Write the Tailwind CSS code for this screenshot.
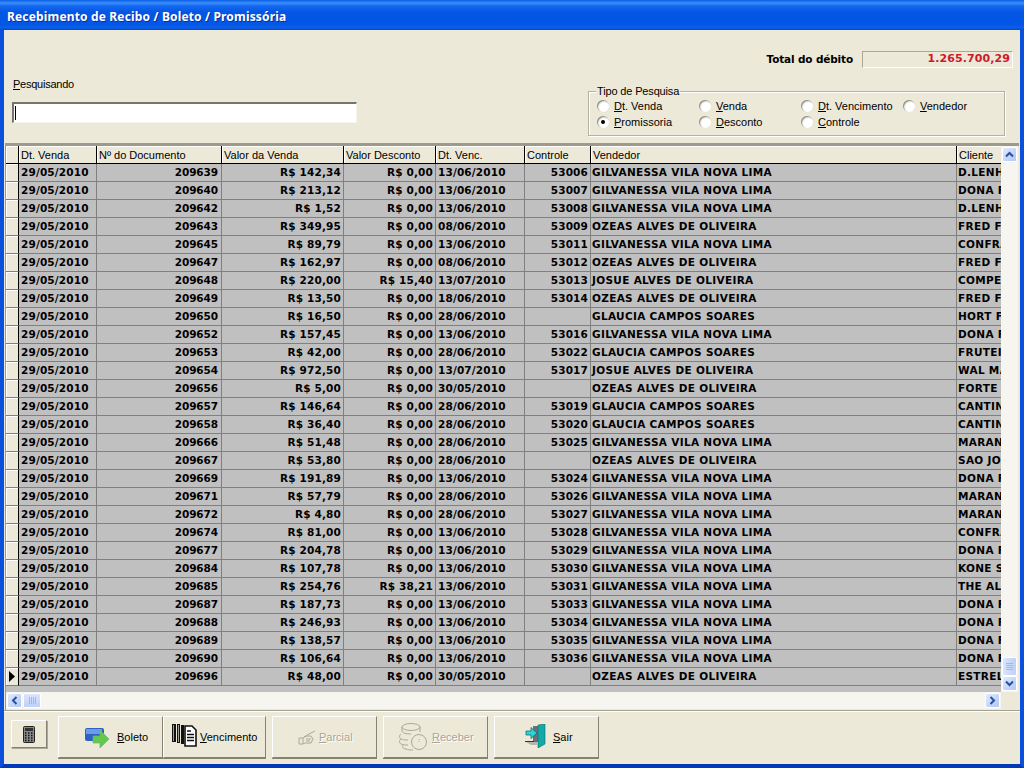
<!DOCTYPE html>
<html>
<head>
<meta charset="utf-8">
<script src="https://cdn.jsdelivr.net/npm/@tailwindcss/browser@4"></script>
</head>
<body class="m-0 overflow-hidden">
<div class="w-[1024px] h-[768px] flex flex-col bg-[#ece9d8] font-['Liberation_Sans',sans-serif] text-[11px] text-black overflow-hidden">
  <!-- title bar -->
  <div class="h-[30px] shrink-0 flex items-center pl-[7px] pt-[4px] bg-[linear-gradient(180deg,#0a5ee6_0px,#3b8ffb_3px,#1468ee_6px,#0457e4_12px,#0356e6_24px,#0a5fe8_28px,#0047c4_30px)] text-white font-['Noto_Sans',sans-serif] font-bold text-[12px] tracking-[0.16px] [text-shadow:1px_1px_0_#0a2f9c]">Recebimento de Recibo / Boleto / Promissória</div>
  <!-- client area -->
  <div class="flex-1 min-h-0 flex flex-col border-x-[4px] border-b-[4px] border-x-[#0a50dc] border-b-[#0339b8]">
    <!-- search panel -->
    <div class="h-[113px] shrink-0 flex justify-between">
      <div class="pl-[9px] pt-[47px] w-[353px]">
        <div class="leading-[14px] h-[14px] tracking-[-0.25px]"><u>P</u>esquisando</div>
        <div class="mt-[11px] ml-[-1px] h-[21px] bg-white border-t-2 border-l-2 border-t-[#77746a] border-l-[#77746a] border-b border-r border-b-[#f5f4ee] border-r-[#f5f4ee] flex items-center pl-[1px]"><div class="w-px h-[14px] bg-black"></div></div>
      </div>
      <div class="flex flex-col items-end pr-[7px] pt-[21px]">
        <div class="flex items-center h-[17px]">
          <span class="font-['DejaVu_Sans',sans-serif] font-bold text-[10.5px] tracking-[-0.15px]">Total do débito</span>
          <div class="ml-[9px] w-[151px] h-[17px] border border-t-[#aca899] border-l-[#aca899] border-b-white border-r-white flex items-center justify-end pr-[2px] font-['DejaVu_Sans',sans-serif] font-bold text-[11px] tracking-[0.1px] text-[#cc1a2a]">1.265.700,29</div>
        </div>
        <div class="relative mt-[23px] mr-[8px] w-[417px] h-[45px] border border-[#b5b2a2] shadow-[inset_1px_1px_0_#fff,1px_1px_0_#fff] pl-[8px] pt-[6px]">
          <span class="absolute left-[7px] top-[-7px] px-px bg-[#ece9d8] leading-[13px] tracking-[-0.15px]">Tipo de Pesquisa</span>
          <div class="grid grid-cols-[102px_102px_102px_100px] grid-rows-[16px_16px]">
            <label class="flex items-center gap-[5px]"><span class="w-[12px] h-[12px] rounded-full bg-[radial-gradient(circle_at_65%_65%,#fff_45%,#c9c6b8_100%)] shadow-[inset_1px_1px_1px_#8f8d80]"></span><span><u>D</u>t. Venda</span></label>
            <label class="flex items-center gap-[5px]"><span class="w-[12px] h-[12px] rounded-full bg-[radial-gradient(circle_at_65%_65%,#fff_45%,#c9c6b8_100%)] shadow-[inset_1px_1px_1px_#8f8d80]"></span><span><u>V</u>enda</span></label>
            <label class="flex items-center gap-[5px]"><span class="w-[12px] h-[12px] rounded-full bg-[radial-gradient(circle_at_65%_65%,#fff_45%,#c9c6b8_100%)] shadow-[inset_1px_1px_1px_#8f8d80]"></span><span><u>D</u>t. Vencimento</span></label>
            <label class="flex items-center gap-[5px]"><span class="w-[12px] h-[12px] rounded-full bg-[radial-gradient(circle_at_65%_65%,#fff_45%,#c9c6b8_100%)] shadow-[inset_1px_1px_1px_#8f8d80]"></span><span><u>V</u>endedor</span></label>
            <label class="flex items-center gap-[5px]"><span class="w-[12px] h-[12px] rounded-full bg-[radial-gradient(circle_at_65%_65%,#fff_45%,#c9c6b8_100%)] shadow-[inset_1px_1px_1px_#8f8d80] flex items-center justify-center"><span class="w-[4px] h-[4px] rounded-full bg-black"></span></span><span><u>P</u>romissoria</span></label>
            <label class="flex items-center gap-[5px]"><span class="w-[12px] h-[12px] rounded-full bg-[radial-gradient(circle_at_65%_65%,#fff_45%,#c9c6b8_100%)] shadow-[inset_1px_1px_1px_#8f8d80]"></span><span><u>D</u>esconto</span></label>
            <label class="flex items-center gap-[5px]"><span class="w-[12px] h-[12px] rounded-full bg-[radial-gradient(circle_at_65%_65%,#fff_45%,#c9c6b8_100%)] shadow-[inset_1px_1px_1px_#8f8d80]"></span><span><u>C</u>ontrole</span></label>
          </div>
        </div>
      </div>
    </div>
    <!-- grid -->
    <div class="h-[567px] shrink-0 ml-[1px] w-[1014px] border-t-[3px] border-l-[1px] border-t-[#9d9a8c] border-l-[#9d9a8c] flex flex-col">
      <div class="h-[546px] flex">
        <div class="w-[995px] h-[546px] bg-[#c0c0c0] overflow-hidden flex flex-col">
          <div class="h-[18px] shrink-0 grid grid-cols-[13px_78px_125px_122px_92px_89px_66px_366px_44px] bg-[#ece9d8] border-b border-b-black leading-[19px] [&>div]:border-r [&>div]:border-r-black [&>div]:pl-[2px] [&>div]:overflow-hidden [&>div]:whitespace-nowrap [&>div]:shadow-[inset_1px_1px_0_#fff]">
            <div></div><div>Dt. Venda</div><div>Nº do Documento</div><div>Valor da Venda</div><div>Valor Desconto</div><div>Dt. Venc.</div><div>Controle</div><div>Vendedor</div><div class="!border-r-0">Cliente</div>
          </div>
          <div id="rows" class="flex flex-col"></div>
        </div>
        <!-- vertical scrollbar -->
        <div class="w-[17px] h-[546px] bg-[#f6f5ef] flex flex-col items-center py-px">
          <div class="w-[15px] h-[15px] rounded-[2px] border border-white bg-[linear-gradient(135deg,#e1eafe,#aec8f7)] flex items-center justify-center"><svg width="9" height="7" viewBox="0 0 9 7"><path d="M1 5.5 4.5 2 8 5.5" fill="none" stroke="#2a4f9f" stroke-width="2"/></svg></div>
          <div class="flex-1"></div>
          <div class="w-[15px] h-[19px] rounded-[2px] border border-white bg-[linear-gradient(90deg,#dbe5fd,#bdd0fa)] flex flex-col items-center justify-center gap-px"><span class="w-[7px] h-px bg-[#9db8f0]"></span><span class="w-[7px] h-px bg-[#9db8f0]"></span><span class="w-[7px] h-px bg-[#9db8f0]"></span><span class="w-[7px] h-px bg-[#9db8f0]"></span></div>
          <div class="w-[15px] h-[15px] rounded-[2px] border border-white bg-[linear-gradient(135deg,#e1eafe,#aec8f7)] flex items-center justify-center"><svg width="9" height="7" viewBox="0 0 9 7"><path d="M1 1.5 4.5 5 8 1.5" fill="none" stroke="#2a4f9f" stroke-width="2"/></svg></div>
        </div>
      </div>
      <!-- horizontal scrollbar -->
      <div class="h-[17px] flex">
        <div class="w-[995px] h-[17px] bg-[#f6f5ef] flex items-center px-px">
          <div class="w-[15px] h-[15px] rounded-[2px] border border-white bg-[linear-gradient(135deg,#e1eafe,#aec8f7)] flex items-center justify-center"><svg width="7" height="9" viewBox="0 0 7 9"><path d="M5.5 1 2 4.5 5.5 8" fill="none" stroke="#2a4f9f" stroke-width="2"/></svg></div>
          <div class="ml-px w-[18px] h-[15px] rounded-[2px] border border-white bg-[linear-gradient(180deg,#dbe5fd,#bdd0fa)] flex items-center justify-center gap-px"><span class="w-px h-[7px] bg-[#9db8f0]"></span><span class="w-px h-[7px] bg-[#9db8f0]"></span><span class="w-px h-[7px] bg-[#9db8f0]"></span><span class="w-px h-[7px] bg-[#9db8f0]"></span></div>
          <div class="flex-1"></div>
          <div class="w-[15px] h-[15px] rounded-[2px] border border-white bg-[linear-gradient(135deg,#e1eafe,#aec8f7)] flex items-center justify-center"><svg width="7" height="9" viewBox="0 0 7 9"><path d="M1.5 1 5 4.5 1.5 8" fill="none" stroke="#2a4f9f" stroke-width="2"/></svg></div>
        </div>
        <div class="w-[17px] bg-[#ece9d8]"></div>
      </div>
    </div>
    <!-- toolbar -->
    <div class="flex-1 border-t border-t-[#a5a294] shadow-[inset_0_1px_0_#fff] flex items-start pt-[5px] pl-[7px]">
      <button class="mt-[4px] w-[36px] h-[28px] flex items-center justify-center bg-[#ece9d8] border border-t-white border-l-white border-r-[#85826f] border-b-[#85826f] shadow-[1px_1px_0_#aca899]">
        <svg width="12" height="17" viewBox="0 0 12 17"><rect x=".5" y=".5" width="11" height="16" rx="1" fill="#8a8a8a" stroke="#222"/><rect x="2" y="2" width="8" height="3" fill="#333"/><path d="M2 7h1.5M5 7h1.5M8 7h1.5M2 9.5h1.5M5 9.5h1.5M8 9.5h1.5M2 12h1.5M5 12h1.5M8 12h1.5M2 14.5h1.5M5 14.5h1.5M8 14.5h1.5" stroke="#111" stroke-width="1.5"/></svg>
      </button>
      <button class="ml-[11px] w-[105px] h-[42px] flex items-center bg-[#ece9d8] border border-t-white border-l-white border-r-[#85826f] border-b-[#85826f] shadow-[0_1px_0_#85826f] pl-[26px]">
        <svg class="mt-[4px]" width="25" height="24" viewBox="0 0 25 24"><rect x="0" y="1" width="19" height="13" rx="2" fill="#2b62c4"/><rect x="1" y="2" width="16" height="5" fill="#6e9be6"/><path d="M8 9h7V3l9 9-9 9v-5H8z" fill="#63c94a" stroke="#6fae8a" stroke-width=".7"/></svg>
        <span class="ml-[7px]"><u>B</u>oleto</span>
      </button>
      <button class="w-[103px] h-[42px] flex items-center bg-[#ece9d8] border border-t-white border-l-white border-r-[#85826f] border-b-[#85826f] shadow-[0_1px_0_#85826f] pl-[8px]">
        <svg class="mb-[4px]" width="25" height="24" viewBox="0 0 25 24"><path d="M0 1h4v18H0zM5 1h3v19H5zM9 2h3v19H9z" fill="#111"/><path d="M1.500 2v16M6.500 2v17" stroke="#fff" stroke-width=".6"/><path d="M13 3h7l4 4v16H13z" fill="#fff" stroke="#111" stroke-width="1.6"/><path d="M15 8h4M15 11.500h7M15 14.500h7M15 17.500h7" stroke="#111" stroke-width="1.6"/></svg>
        <span class="ml-[3px]"><u>V</u>encimento</span>
      </button>
      <button class="ml-[6px] w-[105px] h-[42px] flex items-center bg-[#ece9d8] border border-t-white border-l-white border-r-[#85826f] border-b-[#85826f] shadow-[0_1px_0_#85826f] pl-[25px] text-[#a8a596] [text-shadow:1px_1px_0_#fff]">
        <svg class="mt-[1px]" width="18" height="16" viewBox="0 0 18 16" fill="none" stroke="#aca899"><path d="M1 8h4v6H1zM5 8l4-3 8-4M6 7l3-1h4l2 3-2 4H7l-2 1M8 9h5M8 11h4"/></svg>
        <span class="ml-[3px]"><u>P</u>arcial</span>
      </button>
      <button class="ml-[6px] w-[105px] h-[42px] flex items-center bg-[#ece9d8] border border-t-white border-l-white border-r-[#85826f] border-b-[#85826f] shadow-[0_1px_0_#85826f] pl-[14px] text-[#a8a596] [text-shadow:1px_1px_0_#fff]">
        <svg width="30" height="30" viewBox="0 0 30 30" fill="none" stroke="#aca899"><ellipse cx="13" cy="5" rx="9" ry="3.500"/><path d="M4 5v4c0 2 4 3 9 3M22 5v5M3 12c-2 1-2 4 0 5 2 1 5 1 7 1M3 17c-2 1-2 4 0 5 2 1 5 1 7 1M5 23c-1 2 0 4 3 4 2 1 5 1 7 1"/><circle cx="21" cy="20" r="7.500"/><path d="M21 17v4" stroke-dasharray="1 1"/></svg>
        <span class="ml-[4px]"><u>R</u>eceber</span>
      </button>
      <button class="ml-[6px] w-[105px] h-[42px] flex items-center bg-[#ece9d8] border border-t-white border-l-white border-r-[#85826f] border-b-[#85826f] shadow-[0_1px_0_#85826f] pl-[30px]">
        <svg class="mb-[2px]" width="22" height="24" viewBox="0 0 22 24"><path d="M8 2h9v18H8z" fill="#6e6e78"/><path d="M13 1l7-1v20l-7 4z" fill="#12a9a6" stroke="#0c6f6e" stroke-width=".6"/><path d="M1 18h12v3H6z" fill="#b7b5ad"/><path d="M0 17.500h9" stroke="#333"/><path d="M1 7h5V3.500L12 9l-6 5.500V11H1z" fill="#27d6dc" stroke="#0b5f66" stroke-width=".7"/></svg>
        <span class="ml-[6px]"><u>S</u>air</span>
      </button>
    </div>
  </div>
</div>
<script>
const data = [
["209639","142,34","0,00","13/06/2010","53006","GILVANESSA VILA NOVA LIMA","D.LENHA"],
["209640","213,12","0,00","13/06/2010","53007","GILVANESSA VILA NOVA LIMA","DONA FLOR"],
["209642","1,52","0,00","13/06/2010","53008","GILVANESSA VILA NOVA LIMA","D.LENHA"],
["209643","349,95","0,00","08/06/2010","53009","OZEAS ALVES DE OLIVEIRA","FRED FRIOS"],
["209645","89,79","0,00","13/06/2010","53011","GILVANESSA VILA NOVA LIMA","CONFRARIA"],
["209647","162,97","0,00","08/06/2010","53012","OZEAS ALVES DE OLIVEIRA","FRED FRIOS"],
["209648","220,00","15,40","13/07/2010","53013","JOSUE ALVES DE OLIVEIRA","COMPER"],
["209649","13,50","0,00","18/06/2010","53014","OZEAS ALVES DE OLIVEIRA","FRED FRIOS"],
["209650","16,50","0,00","28/06/2010","","GLAUCIA CAMPOS SOARES","HORT FRUTI"],
["209652","157,45","0,00","13/06/2010","53016","GILVANESSA VILA NOVA LIMA","DONA FLOR"],
["209653","42,00","0,00","28/06/2010","53022","GLAUCIA CAMPOS SOARES","FRUTEIRA"],
["209654","972,50","0,00","13/07/2010","53017","JOSUE ALVES DE OLIVEIRA","WAL MART"],
["209656","5,00","0,00","30/05/2010","","OZEAS ALVES DE OLIVEIRA","FORTE"],
["209657","146,64","0,00","28/06/2010","53019","GLAUCIA CAMPOS SOARES","CANTINA"],
["209658","36,40","0,00","28/06/2010","53020","GLAUCIA CAMPOS SOARES","CANTINA"],
["209666","51,48","0,00","28/06/2010","53025","GILVANESSA VILA NOVA LIMA","MARANATA"],
["209667","53,80","0,00","28/06/2010","","OZEAS ALVES DE OLIVEIRA","SAO JOSE"],
["209669","191,89","0,00","13/06/2010","53024","GILVANESSA VILA NOVA LIMA","DONA FLOR"],
["209671","57,79","0,00","28/06/2010","53026","GILVANESSA VILA NOVA LIMA","MARANATA"],
["209672","4,80","0,00","28/06/2010","53027","GILVANESSA VILA NOVA LIMA","MARANATA"],
["209674","81,00","0,00","13/06/2010","53028","GILVANESSA VILA NOVA LIMA","CONFRARIA"],
["209677","204,78","0,00","13/06/2010","53029","GILVANESSA VILA NOVA LIMA","DONA FLOR"],
["209684","107,78","0,00","13/06/2010","53030","GILVANESSA VILA NOVA LIMA","KONE SUSHI"],
["209685","254,76","38,21","13/06/2010","53031","GILVANESSA VILA NOVA LIMA","THE ALL"],
["209687","187,73","0,00","13/06/2010","53033","GILVANESSA VILA NOVA LIMA","DONA FLOR"],
["209688","246,93","0,00","13/06/2010","53034","GILVANESSA VILA NOVA LIMA","DONA FLOR"],
["209689","138,57","0,00","13/06/2010","53035","GILVANESSA VILA NOVA LIMA","DONA FLOR"],
["209690","106,64","0,00","13/06/2010","53036","GILVANESSA VILA NOVA LIMA","DONA FLOR"],
["209696","48,00","0,00","30/05/2010","","OZEAS ALVES DE OLIVEIRA","ESTRELA"]
];
const rowClass = "h-[18px] shrink-0 grid grid-cols-[13px_78px_125px_122px_92px_89px_66px_366px_44px] font-['DejaVu_Sans',sans-serif] font-bold text-[10.5px] leading-[17px] tracking-[0.15px] [&>div]:border-r [&>div]:border-b [&>div]:border-[#808080] [&>div]:overflow-hidden [&>div]:whitespace-nowrap";
const ind = "bg-[#ece9d8] !border-r-black shadow-[inset_1px_1px_0_#fff] flex items-center justify-center";
const L = "pl-[2px]";
const R = "text-right pr-[2px]";
const DOC = "text-right pr-[3px] tracking-[-0.1px]";
const TXT = "pl-[1px] tracking-[0.32px]";
const arrow = '<svg width="6" height="11" viewBox="0 0 6 11"><path d="M0 0l6 5.500L0 11z" fill="#000"/></svg>';
document.getElementById("rows").innerHTML = data.map((r, i) =>
  '<div class="' + rowClass + '"><div class="' + ind + '">' + (i === data.length - 1 ? arrow : '') + '</div>' +
  '<div class="' + L + '">29/05/2010</div><div class="' + DOC + '">' + r[0] + '</div><div class="' + R + '">R$ ' + r[1] + '</div><div class="' + R + '">R$ ' + r[2] + '</div><div class="' + L + '">' + r[3] + '</div><div class="' + R + '">' + r[4] + '</div><div class="' + TXT + '">' + r[5] + '</div><div class="' + TXT + ' !border-r-0">' + r[6] + '</div></div>'
).join("");
</script>
</body>
</html>
